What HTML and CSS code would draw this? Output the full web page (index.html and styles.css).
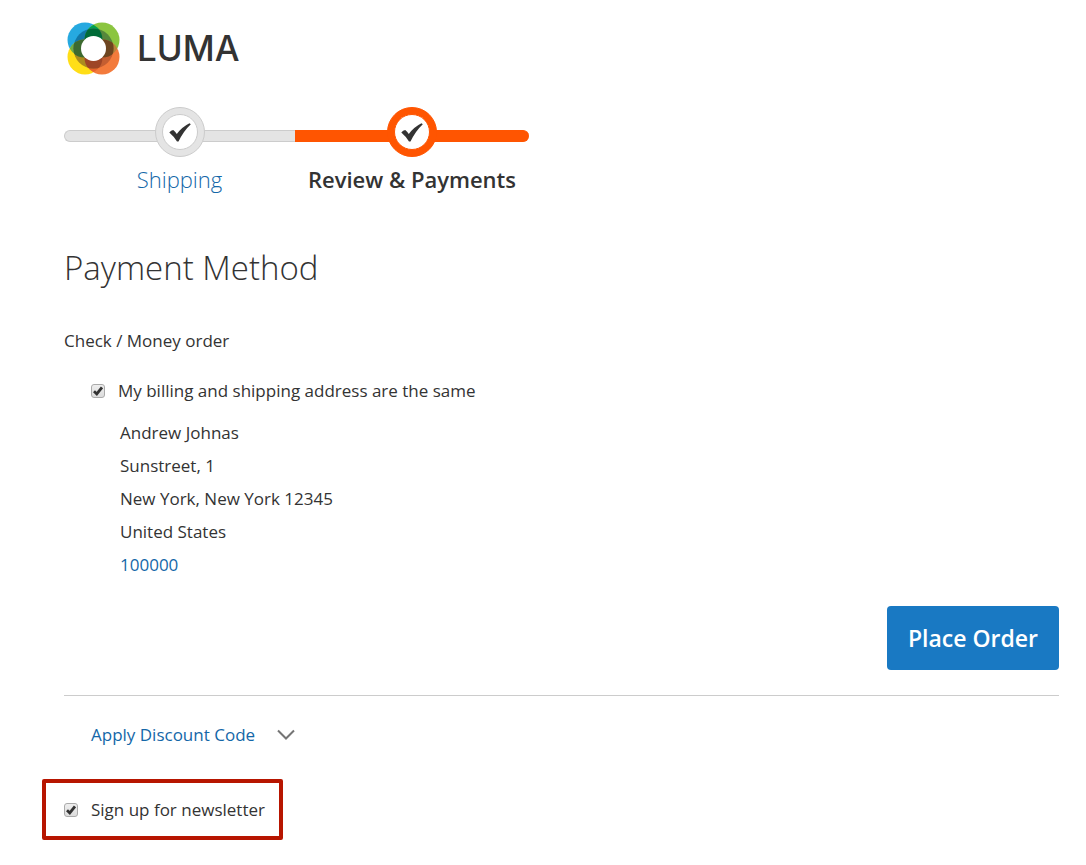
FILE: index.html
```html
<!DOCTYPE html>
<html lang="en">
<head>
<meta charset="utf-8">
<meta name="viewport" content="width=device-width, initial-scale=1">
<title>Checkout</title>
<link rel="stylesheet" href="styles.css">
</head>
<body>
<header class="header">
  <a class="logo" href="#">
    <svg class="logo-mark" viewBox="0 0 55 55" aria-hidden="true">
      <circle cx="19" cy="19" r="17.5" fill="#26a9e0"/>
      <circle cx="36" cy="19" r="17.5" fill="#8bc540"/>
      <circle cx="19" cy="36" r="17.5" fill="#ffde17"/>
      <circle cx="36" cy="36" r="17.5" fill="#f37b3c"/>
      <path d="M27.5 3.7A17.5 17.5 0 0 1 27.5 34.3A17.5 17.5 0 0 1 27.5 3.7Z" fill="#00a04f"/>
      <path d="M27.5 20.7A17.5 17.5 0 0 1 27.5 51.3A17.5 17.5 0 0 1 27.5 20.7Z" fill="#e8632c"/>
      <path d="M3.7 27.5A17.5 17.5 0 0 1 34.3 27.5A17.5 17.5 0 0 1 3.7 27.5Z" fill="#6fae45"/>
      <path d="M20.7 27.5A17.5 17.5 0 0 1 51.3 27.5A17.5 17.5 0 0 1 20.7 27.5Z" fill="#b9823a"/>
      <clipPath id="ring"><circle cx="27.5" cy="27.5" r="20"/></clipPath>
      <g clip-path="url(#ring)">
        <circle cx="19" cy="19" r="17.5" fill="#1277a6"/>
        <circle cx="36" cy="19" r="17.5" fill="#56873c"/>
        <circle cx="19" cy="36" r="17.5" fill="#ab8b1f"/>
        <circle cx="36" cy="36" r="17.5" fill="#c45e31"/>
        <path d="M27.5 3.7A17.5 17.5 0 0 1 27.5 34.3A17.5 17.5 0 0 1 27.5 3.7Z" fill="#006b38"/>
        <path d="M27.5 20.7A17.5 17.5 0 0 1 27.5 51.3A17.5 17.5 0 0 1 27.5 20.7Z" fill="#9e4526"/>
        <path d="M3.7 27.5A17.5 17.5 0 0 1 34.3 27.5A17.5 17.5 0 0 1 3.7 27.5Z" fill="#3c6a30"/>
        <path d="M20.7 27.5A17.5 17.5 0 0 1 51.3 27.5A17.5 17.5 0 0 1 20.7 27.5Z" fill="#6d4520"/>
      </g>
      <circle cx="27.5" cy="27.5" r="12.5" fill="#fff"/>
    </svg>
    <span class="logo-name">LUMA</span>
  </a>
</header>
<main class="checkout">
  <ol class="steps">
    <li class="step">
      <span class="step-track"><span class="step-dot"><svg class="tick" viewBox="0 0 22 19" aria-hidden="true"><path d="M.3 9.500Q2 7 4.200 7Q6.200 8.500 7.800 11Q13 4 20.500.3L21.800 1.200Q14.500 8 9.500 18.500H8Q5 13.500.3 9.500Z"/></svg></span></span>
      <a class="step-label" href="#">Shipping</a>
    </li>
    <li class="step active">
      <span class="step-track"><span class="step-dot"><svg class="tick" viewBox="0 0 22 19" aria-hidden="true"><path d="M.3 9.500Q2 7 4.200 7Q6.200 8.500 7.800 11Q13 4 20.500.3L21.800 1.200Q14.500 8 9.500 18.500H8Q5 13.500.3 9.500Z"/></svg></span></span>
      <span class="step-label">Review &amp; Payments</span>
    </li>
  </ol>
  <section class="payment">
    <h1 class="title">Payment Method</h1>
    <h2 class="method">Check / Money order</h2>
    <div class="billing">
      <label class="check"><input class="box" type="checkbox" checked><span>My billing and shipping address are the same</span></label>
      <address class="address">
        <span>Andrew Johnas</span>
        <span>Sunstreet, 1</span>
        <span>New York, New York 12345</span>
        <span>United States</span>
        <a href="tel:100000">100000</a>
      </address>
    </div>
    <div class="actions"><button class="place-order" type="button">Place Order</button></div>
  </section>
  <button class="discount" type="button">
    <span>Apply Discount Code</span>
    <svg class="chevron" viewBox="0 0 18 11" aria-hidden="true"><path d="M1 1.500 9 9.500 17 1.500"/></svg>
  </button>
  <div class="newsletter">
    <label class="check"><input class="box" type="checkbox" checked><span>Sign up for newsletter</span></label>
  </div>
</main>
</body>
</html>
```
FILE: styles.css
```css
*,
*::before {
  box-sizing: border-box;
}

body {
  margin: 0;
  background: #fff;
  color: #333;
  font-family: "Open Sans", sans-serif;
  font-size: 17px;
  line-height: 33px;
}

a {
  color: #1467a8;
  text-decoration: none;
}

.header {
  display: flex;
  padding: 21px 27px 0 66px;
}

.logo {
  display: flex;
  align-items: center;
  gap: 16px;
  color: #333;
}

.logo-mark {
  width: 55px;
  height: 55px;
}

.logo-name {
  font-family: Inter, sans-serif;
  font-size: 35px;
  font-weight: 500;
}

.checkout {
  padding: 31px 27px 24px 64px;
}

.steps {
  display: grid;
  grid-template-columns: 231fr 234fr;
  max-width: 465px;
  margin: 0;
  padding: 0;
  list-style: none;
}

.step {
  display: flex;
  flex-direction: column;
  align-items: center;
}

.step-track {
  position: relative;
  display: flex;
  justify-content: center;
  width: 100%;
}

.step-track::before {
  content: "";
  position: absolute;
  top: 23px;
  left: 0;
  right: 0;
  height: 12px;
  background: #e4e4e4;
  border: 1px solid #ccc;
  border-right: 0;
  border-radius: 6px 0 0 6px;
}

.active .step-track::before {
  background: #ff5501;
  border-color: #ff5501;
  border-radius: 0 6px 6px 0;
}

.step-dot {
  position: relative;
  display: grid;
  place-items: center;
  width: 50px;
  height: 50px;
  background: #e4e4e4;
  border: 1px solid #ccc;
  border-radius: 50%;
}

.step-dot::before {
  content: "";
  grid-area: 1 / 1;
  width: 36px;
  height: 36px;
  background: #fff;
  border: 1px solid #ccc;
  border-radius: 50%;
}

.active .step-dot,
.active .step-dot::before {
  border-color: #ff5501;
}

.active .step-dot {
  background: #ff5501;
}

.tick {
  grid-area: 1 / 1;
  z-index: 1;
  width: 22px;
  height: 19px;
  fill: #333;
}

.step-label {
  margin-top: 6px;
  font-size: 22px;
  font-weight: 300;
  white-space: nowrap;
}

.active .step-label {
  font-weight: 600;
}

.title {
  margin: 48px 0 0;
  font-size: 33px;
  font-weight: 300;
  line-height: 48px;
}

.method {
  margin: 32px 0 0;
  font-size: 17px;
  font-weight: 400;
}

.billing {
  margin: 17px 0 0 27px;
}

.check {
  display: flex;
  align-items: center;
  gap: 13px;
}

.box {
  appearance: none;
  width: 14px;
  height: 14px;
  margin: 0;
  border: 1px solid #aaa;
  border-radius: 3px;
  background: linear-gradient(#eee, #dcdcdc);
}

.box:checked {
  background: url("data:image/svg+xml,%3Csvg xmlns='http://www.w3.org/2000/svg' viewBox='0 0 12 12'%3E%3Cpath d='M2 6.200 4.800 8.900 10 2.300' fill='none' stroke='%23333' stroke-width='2.800'/%3E%3C/svg%3E"), linear-gradient(#eee, #dcdcdc);
}

.address {
  display: flex;
  flex-direction: column;
  align-items: flex-start;
  margin: 9px 0 0 29px;
  font-style: normal;
}

.actions {
  display: flex;
  justify-content: flex-end;
  margin-top: 25px;
  padding-bottom: 25px;
  border-bottom: 1px solid #ccc;
}

.place-order {
  padding: 16px 21px;
  background: #1979c3;
  border: 0;
  border-radius: 4px;
  color: #fff;
  font: 600 23px/32px "Open Sans", sans-serif;
  cursor: pointer;
}

.discount {
  display: flex;
  align-items: center;
  gap: 22px;
  margin: 22px 0 0 27px;
  padding: 0;
  background: none;
  border: 0;
  color: #1467a8;
  font: inherit;
  cursor: pointer;
}

.chevron {
  width: 18px;
  height: 11px;
  fill: none;
  stroke: #757575;
  stroke-width: 2;
}

.newsletter {
  width: fit-content;
  margin: 28px 0 0 -22px;
  padding: 10px 14px 10px 18px;
  border: 4px solid #b71500;
  border-radius: 2px;
}
```
